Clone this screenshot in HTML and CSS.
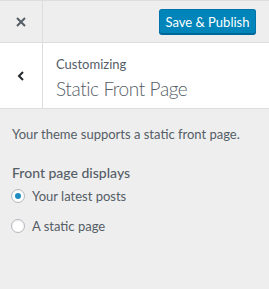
FILE: index.html
```html
<!DOCTYPE html>
<html lang="en">
<head>
    <meta charset="UTF-8">
    <title>Customizing Static Front Page</title>
    <link rel="stylesheet" href="styles.css">
</head>
<body>
    <div class="header">
        <button class="close" title="Close">
            <svg width="10" height="10" viewBox="0 0 10 10"><path d="M1 1 L9 9 M9 1 L1 9" stroke="#555d66" stroke-width="2" fill="none"/></svg>
        </button>
        <div class="actions">
            <button class="publish">Save &amp; Publish</button>
        </div>
    </div>
    <div class="section-title">
        <button class="back" title="Back">
            <svg width="8" height="10" viewBox="0 0 8 10"><path d="M6 1 L2 5 L6 9" stroke="#23282d" stroke-width="2" fill="none"/></svg>
        </button>
        <div class="titles">
            <span class="action">Customizing</span>
            <h3>Static Front Page</h3>
        </div>
    </div>
    <div class="content">
        <p class="desc">Your theme supports a static front page.</p>
        <div class="control">
            <span class="control-title">Front page displays</span>
            <label class="option"><span class="radio checked"></span>Your latest posts</label>
            <label class="option"><span class="radio"></span>A static page</label>
        </div>
    </div>
</body>
</html>
```

FILE: styles.css
```css
body {
    margin: 0;
    background: #eeeeee;
    font-family: Lato, "Noto Sans", sans-serif;
    font-size: 13px;
    color: #555d66;
}
button {
    font-family: inherit;
    cursor: pointer;
}
.header {
    display: flex;
    align-items: center;
    height: 41px;
    border-top: 1px solid #dddddd;
    border-bottom: 1px solid #dddddd;
    background: #eeeeee;
}
.close, .back {
    width: 43px;
    height: 100%;
    padding: 0;
    border: 0;
    border-right: 1px solid #dddddd;
    background: transparent;
    display: flex;
    align-items: center;
    justify-content: center;
}
.actions {
    flex: 1;
    display: flex;
    justify-content: flex-end;
    padding-right: 13px;
}
.publish {
    height: 25px;
    width: 97px;
    padding: 0;
    font-size: 13px;
    color: #ffffff;
    background: #0085ba;
    border: 1px solid #0073aa;
    border-bottom-color: #006799;
    border-radius: 3px;
    box-shadow: 0 1px 0 #006799;
}
.section-title {
    display: flex;
    height: 65px;
    background: #ffffff;
    border-bottom: 1px solid #dddddd;
}
.titles {
    padding: 12px 0 0 13px;
}
.action {
    display: block;
    font-size: 13px;
    line-height: 18px;
}
.titles h3 {
    margin: 3px 0 0;
    font-size: 19px;
    font-weight: 300;
    letter-spacing: -0.4px;
    line-height: 26px;
    color: #555d66;
}
.content {
    padding: 15px 12px;
}
.desc {
    margin: 0 0 19px;
    line-height: 20px;
}
.control-title {
    display: block;
    font-size: 14px;
    font-weight: 500;
    line-height: 20px;
    margin-bottom: 0;
}
.option {
    display: flex;
    align-items: center;
    height: 26px;
    margin-bottom: 4px;
}
.radio {
    width: 12px;
    height: 12px;
    margin-left: -1px;
    border: 1px solid #b4b9be;
    border-radius: 50%;
    background: #ffffff;
    box-shadow: inset 0 1px 2px rgba(0, 0, 0, 0.07);
    margin-right: 7px;
    display: flex;
    align-items: center;
    justify-content: center;
}
.radio.checked::after {
    content: "";
    width: 6px;
    height: 6px;
    border-radius: 50%;
    background: #1e8cbe;
}
```
